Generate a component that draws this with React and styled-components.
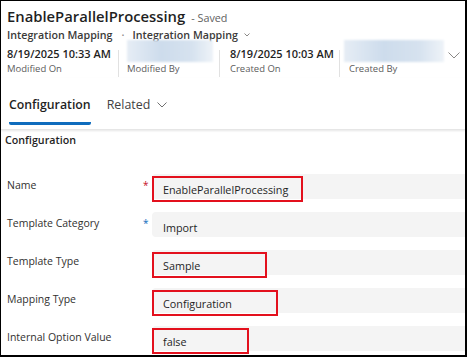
import React from "react";
import styled, { createGlobalStyle } from "styled-components";

const GlobalStyle = createGlobalStyle`
    html, body {
        margin: 0;
        padding: 0;
        background: #ffffff;
    }
    body {
        font-family: "Open Sans", "Noto Sans", sans-serif;
        color: #1f1f1f;
    }
`;

const meta = [
    { value: "8/19/2025 10:33 AM", label: "Modified On", width: 111, pad: 0 },
    { blurred: 86, label: "Modified By", width: 100, pad: 8 },
    { value: "8/19/2025 10:03 AM", label: "Created On", width: 119, pad: 10 },
    { blurred: 100, label: "Created By", width: 108, pad: 4, indent: 5 },
];

const fields = [
    { label: "Name", value: "EnableParallelProcessing", req: "red", box: 151 },
    { label: "Template Category", value: "Import", req: "blue" },
    { label: "Template Type", value: "Sample", box: 115 },
    { label: "Mapping Type", value: "Configuration", box: 126 },
    { label: "Internal Option Value", value: "false", box: 97 },
];

const Chevron = ({ width = 10, height = 5, color = "#605e5c" }) => (
    <svg width={width} height={height + 1} viewBox={`0 0 ${width} ${height + 1}`} fill="none">
        <path d={`M0.5 0.5 L${width / 2} ${height} L${width - 0.5} 0.5`} stroke={color} strokeWidth="1" />
    </svg>
);

const App = () => {
    return (
        <>
            <GlobalStyle />
            <Frame>
                <Header>
                    <TitleRow>
                        <Title>EnableParallelProcessing</Title>
                        <Saved>- Saved</Saved>
                    </TitleRow>
                    <Breadcrumb>
                        <span>Integration Mapping</span>
                        <Dot>·</Dot>
                        <span>Integration Mapping</span>
                        <Chevron width={6} height={3} color="#8a8886" />
                    </Breadcrumb>
                    <MetaRow>
                        {meta.map((m, i) => (
                            <React.Fragment key={m.label}>
                                {i > 0 && <MetaDivider />}
                                <MetaItem $pad={m.pad} style={{ width: m.width }}>
                                    {m.blurred ? (
                                        <Blur style={{ width: m.blurred }} />
                                    ) : (
                                        <MetaValue>{m.value}</MetaValue>
                                    )}
                                    <MetaLabel $indent={m.indent || 0}>{m.label}</MetaLabel>
                                </MetaItem>
                            </React.Fragment>
                        ))}
                        <MetaChevron>
                            <Chevron width={12} height={6} color="#8a8886" />
                        </MetaChevron>
                    </MetaRow>
                </Header>
                <Tabs>
                    <Tab $active>Configuration</Tab>
                    <Tab>
                        Related
                        <Chevron width={10} height={5} color="#707070" />
                    </Tab>
                </Tabs>
                <Section>
                    <SectionTitle>Configuration</SectionTitle>
                    <Fields>
                        {fields.map((f) => (
                            <FieldRow key={f.label}>
                                <Label>{f.label}</Label>
                                <Req $kind={f.req}>{f.req ? "*" : ""}</Req>
                                <Input>
                                    <Value $box={f.box}>{f.value}</Value>
                                </Input>
                            </FieldRow>
                        ))}
                    </Fields>
                </Section>
            </Frame>
        </>
    );
};

const Frame = styled.div`
    width: 467px;
    height: 357px;
    box-sizing: border-box;
    border-style: solid;
    border-color: #000;
    border-width: 1px 2px 2px 1px;
    overflow: hidden;
    display: flex;
    flex-direction: column;
    background: #fff;
`;

const Header = styled.div`
    padding: 4px 0 0 6px;
    white-space: nowrap;
`;

const TitleRow = styled.div`
    display: flex;
    align-items: baseline;
    gap: 6px;
    height: 22px;
`;

const Title = styled.div`
    font-size: 14.8px;
    line-height: 22px;
    font-weight: 600;
    color: #1f1f1f;
`;

const Saved = styled.div`
    font-size: 10.8px;
    color: #616161;
`;

const Breadcrumb = styled.div`
    display: flex;
    align-items: center;
    font-size: 10.7px;
    line-height: 16px;
    font-weight: 600;
    color: #3b3a39;
    height: 16px;

    svg {
        margin-left: 6px;
    }
`;

const Dot = styled.span`
    color: #8a8886;
    padding: 0 8px 0 9px;
`;

const MetaRow = styled.div`
    display: flex;
    align-items: flex-start;
    height: 35px;
`;

const MetaDivider = styled.div`
    width: 1px;
    height: 27px;
    margin-top: 7px;
    background: #e1e1e1;
    flex-shrink: 0;
`;

const MetaItem = styled.div`
    box-sizing: border-box;
    display: flex;
    flex-direction: column;
    padding-left: ${(p) => p.$pad}px;
    flex-shrink: 0;
`;

const MetaValue = styled.div`
    font-size: 11px;
    font-weight: 600;
    color: #1f1f1f;
    line-height: 16px;
    margin-top: 3px;
`;

const Blur = styled.div`
    height: 22px;
    margin-top: -3px;
    background: linear-gradient(90deg, #e6edf5 0%, #cddcec 40%, #d6e2ef 75%, #eef3f8 100%);
    filter: blur(1.2px);
`;

const MetaLabel = styled.div`
    font-size: 9.5px;
    color: #5c5c5c;
    line-height: 14px;
    padding-left: ${(p) => p.$indent}px;
`;

const MetaChevron = styled.div`
    display: flex;
    padding-top: 9px;
`;

const Tabs = styled.div`
    display: flex;
    gap: 16px;
    padding: 0 8px;
    height: 51px;
    border-bottom: 1px solid #e6e6e6;
    box-shadow: 0 1px 2px rgba(0, 0, 0, 0.1);
    position: relative;
    z-index: 1;
`;

const Tab = styled.div`
    display: flex;
    align-items: flex-start;
    gap: 7px;
    height: 47px;
    padding-top: 18px;
    box-sizing: border-box;
    font-size: ${(p) => (p.$active ? "12.3px" : "12.4px")};
    line-height: 18px;
    color: ${(p) => (p.$active ? "#1f1f1f" : "#424242")};
    font-weight: ${(p) => (p.$active ? 600 : 400)};
    border-bottom: 3px solid ${(p) => (p.$active ? "#0f6cbd" : "transparent")};
    border-radius: 0 0 2px 2px;

    svg {
        margin-top: 6px;
    }
`;

const Section = styled.div`
    flex: 1;
    padding: 3px 0 0 4px;
`;

const SectionTitle = styled.div`
    font-size: 10.7px;
    font-weight: 600;
    line-height: 14px;
    color: #1f1f1f;
`;

const Fields = styled.div`
    display: flex;
    flex-direction: column;
    gap: 13px;
    margin-top: 27px;
    padding-left: 2px;
`;

const FieldRow = styled.div`
    display: grid;
    grid-template-columns: 136px 9px 1fr;
    align-items: start;
    height: 25px;
`;

const Label = styled.div`
    font-size: 10.5px;
    color: #323130;
    line-height: 22px;
`;

const Req = styled.div`
    font-size: 10px;
    line-height: 10px;
    padding-top: 6px;
    color: ${(p) => (p.$kind === "red" ? "#c50f1f" : "#0f6cbd")};
`;

const Input = styled.div`
    background: #f4f4f4;
    height: 25px;
    border-radius: 4px 0 0 4px;
    display: flex;
    align-items: flex-start;
`;

const Value = styled.div`
    box-sizing: border-box;
    height: 26px;
    margin-top: 2px;
    width: ${(p) => (p.$box ? `${p.$box}px` : "auto")};
    display: flex;
    align-items: center;
    padding-left: 9px;
    font-size: 10.8px;
    color: #1f1f1f;
    border: 2px solid ${(p) => (p.$box ? "#e3101d" : "transparent")};
`;

export default App;
